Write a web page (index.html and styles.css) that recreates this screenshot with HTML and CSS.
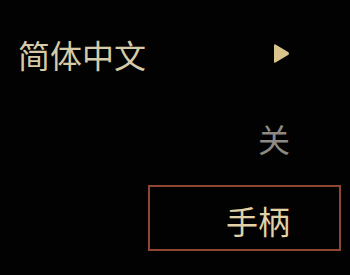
FILE: index.html
```html
<!DOCTYPE html>
<html lang="zh">
<head>
<meta charset="utf-8">
<link rel="stylesheet" href="styles.css">
</head>
<body>
<div class="menu">
  <div class="row row-lang">
    <span class="label">简体中文</span>
    <svg class="arrow" width="17" height="21" viewBox="0 0 17 21"><path d="M2.5 1.5 L15.5 9.3 Q16.5 10.5 15.5 11.7 L2.5 19.5 Q1 20.2 1 18.8 L1 2.2 Q1 0.8 2.5 1.5 Z" fill="#d9c58c"/></svg>
  </div>
  <div class="row row-off"><span class="value">关</span></div>
  <div class="row row-pad"><span class="value">手柄</span></div>
</div>
</body>
</html>
```
FILE: styles.css
```css
html, body {
  margin: 0;
  padding: 0;
  background: #030203;
  width: 350px;
  height: 275px;
  overflow: hidden;
}
.menu {
  display: flex;
  flex-direction: column;
  padding-top: 38px;
  font-family: "Noto Sans CJK SC", "Noto Sans", sans-serif;
  font-size: 32px;
  line-height: 32px;
}
.row-lang {
  display: flex;
  align-items: center;
  justify-content: space-between;
  height: 32px;
  padding-left: 18px;
  padding-right: 60px;
  color: #d6cba9;
}
.arrow {
  display: block;
  margin-top: -2px;
}
.row-off {
  margin-top: 52px;
  height: 32px;
  text-align: right;
  padding-right: 60px;
  color: #8c8a82;
}
.row-pad {
  margin-top: 31px;
  margin-left: 148px;
  margin-right: 9px;
  height: 62px;
  border: 2px solid #8e4733;
  display: flex;
  align-items: center;
  justify-content: flex-end;
  padding-right: 49px;
  color: #e0d2a6;
}
.row-pad .value {
  margin-top: 4px;
}
```
